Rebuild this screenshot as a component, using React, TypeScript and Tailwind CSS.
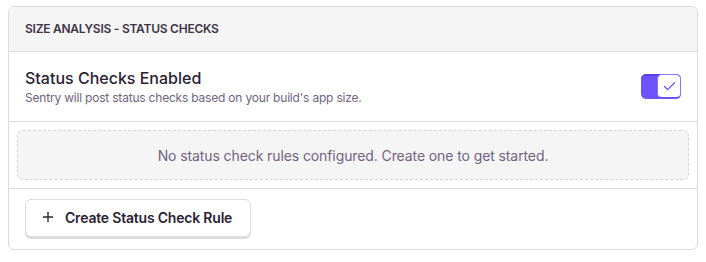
import { Check, Plus } from "lucide-react";

export default function App() {
  return (
    <div className="h-[262px] w-[706px] bg-white px-2 pt-[6px] font-['Inter','Noto_Sans',sans-serif] text-[#2b2233]">
      <section className="overflow-hidden rounded-md border border-[#dcdce0] bg-white">
        <header className="flex h-[45px] items-center border-b border-[#dcdce0] bg-[#f5f5f6] px-4">
          <h2 className="text-[12px] font-semibold uppercase tracking-[-0.25px] text-[#3e3446]">
            Size Analysis - Status Checks
          </h2>
        </header>

        <div className="flex h-[70px] items-center justify-between border-b border-[#dcdce0] px-4">
          <div>
            <p className="text-[16px] font-medium leading-5 text-[#2b2233]">Status Checks Enabled</p>
            <p className="mt-[2px] text-[12px] leading-4 tracking-[-0.2px] text-[#71637e]">
              Sentry will post status checks based on your build's app size.
            </p>
          </div>
          <button
            type="button"
            className="flex h-[25px] w-[40px] items-center justify-end rounded-[5px] border-t-2 border-[#5b3ee8] bg-[#6e52ff] p-0"
          >
            <span className="-mt-[2px] flex h-[25px] w-[24px] items-center justify-center rounded-[5px] border border-[#8a76f5] border-b-2 border-b-[#6e52ff] bg-white">
              <Check className="h-[15px] w-[15px] text-[#6e52ff]" strokeWidth={2} />
            </span>
          </button>
        </div>

        <div className="h-[67px] border-b border-[#dcdce0] px-2 pt-2">
          <div className="flex h-[50px] items-center justify-center rounded-md border border-dashed border-[#d4d4d8] bg-[#f5f5f6]">
            <p className="text-[14px] tracking-[-0.1px] text-[#71637e]">
              No status check rules configured. Create one to get started.
            </p>
          </div>
        </div>

        <div className="h-[60px] px-4 pt-[10px]">
          <button
            type="button"
            className="flex h-[38px] w-[226px] items-center gap-[9px] whitespace-nowrap rounded-md border border-[#dcdce0] bg-white px-[14px] pb-[2px] text-[14px] font-semibold tracking-[-0.2px] text-[#2b2233] shadow-[0_2px_0_#dcdce0]"
          >
            <Plus className="h-4 w-4 shrink-0" strokeWidth={2} />
            Create Status Check Rule
          </button>
        </div>
      </section>
    </div>
  );
}
